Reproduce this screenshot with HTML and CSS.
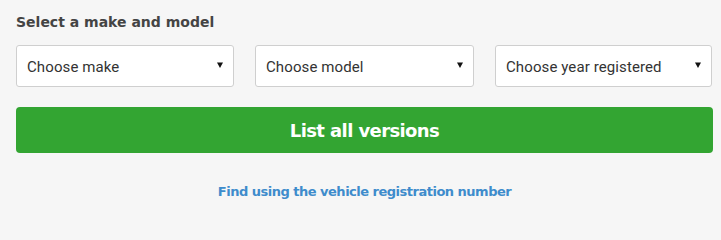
FILE: index.html
```html
<!DOCTYPE html>
<html>
<head>
<meta charset="utf-8">
<link rel="stylesheet" href="styles.css">
</head>
<body>
<div class="panel">
  <h2 class="title">Select a make and model</h2>
  <div class="selects">
    <div class="select"><span class="select-text">Choose make</span><svg class="arrow" width="6" height="6" viewBox="0 0 6 6"><path d="M0 0.5H6L3 6Z" fill="#111"/></svg></div>
    <div class="select"><span class="select-text">Choose model</span><svg class="arrow" width="6" height="6" viewBox="0 0 6 6"><path d="M0 0.5H6L3 6Z" fill="#111"/></svg></div>
    <div class="select"><span class="select-text">Choose year registered</span><svg class="arrow" width="6" height="6" viewBox="0 0 6 6"><path d="M0 0.5H6L3 6Z" fill="#111"/></svg></div>
  </div>
  <button class="btn">List all versions</button>
  <div class="link-row"><a class="link" href="#">Find using the vehicle registration number</a></div>
</div>
</body>
</html>
```
FILE: styles.css
```css
html, body {
  margin: 0;
  padding: 0;
  background: #f6f6f6;
}
body {
  width: 721px;
  height: 212px;
  overflow: hidden;
  font-family: "DejaVu Sans", sans-serif;
}
.panel {
  padding: 12px 8px 0 16px;
}
.title {
  margin: 0;
  font-size: 14px;
  line-height: 20px;
  font-weight: bold;
  color: #444;
}
.selects {
  margin-top: 13px;
  display: grid;
  grid-template-columns: 218px 219px 217px;
  column-gap: 21px;
}
.select {
  box-sizing: border-box;
  height: 42px;
  background: #fff;
  border: 1px solid #cfcfcf;
  border-radius: 3px;
  display: flex;
  align-items: center;
  justify-content: space-between;
  padding: 2px 10px 0 10px;
}
.select-text {
  font-family: Roboto, "Liberation Sans", sans-serif;
  font-size: 15px;
  color: #333;
  letter-spacing: 0.1px;
}
.arrow {
  display: block;
  margin-top: -4px;
}
.btn {
  display: block;
  box-sizing: border-box;
  width: 697px;
  height: 46px;
  margin-top: 20px;
  border: 0;
  border-radius: 4px;
  background: #33a532;
  color: #fff;
  font-family: "DejaVu Sans", sans-serif;
  font-weight: bold;
  font-size: 18px;
  letter-spacing: -0.6px;
  padding: 0;
}
.link-row {
  margin-top: 28px;
  width: 697px;
  text-align: center;
  line-height: 20px;
}
.link {
  font-size: 13px;
  font-weight: bold;
  color: #3e8ccc;
  text-decoration: none;
  letter-spacing: -0.5px;
}
```
